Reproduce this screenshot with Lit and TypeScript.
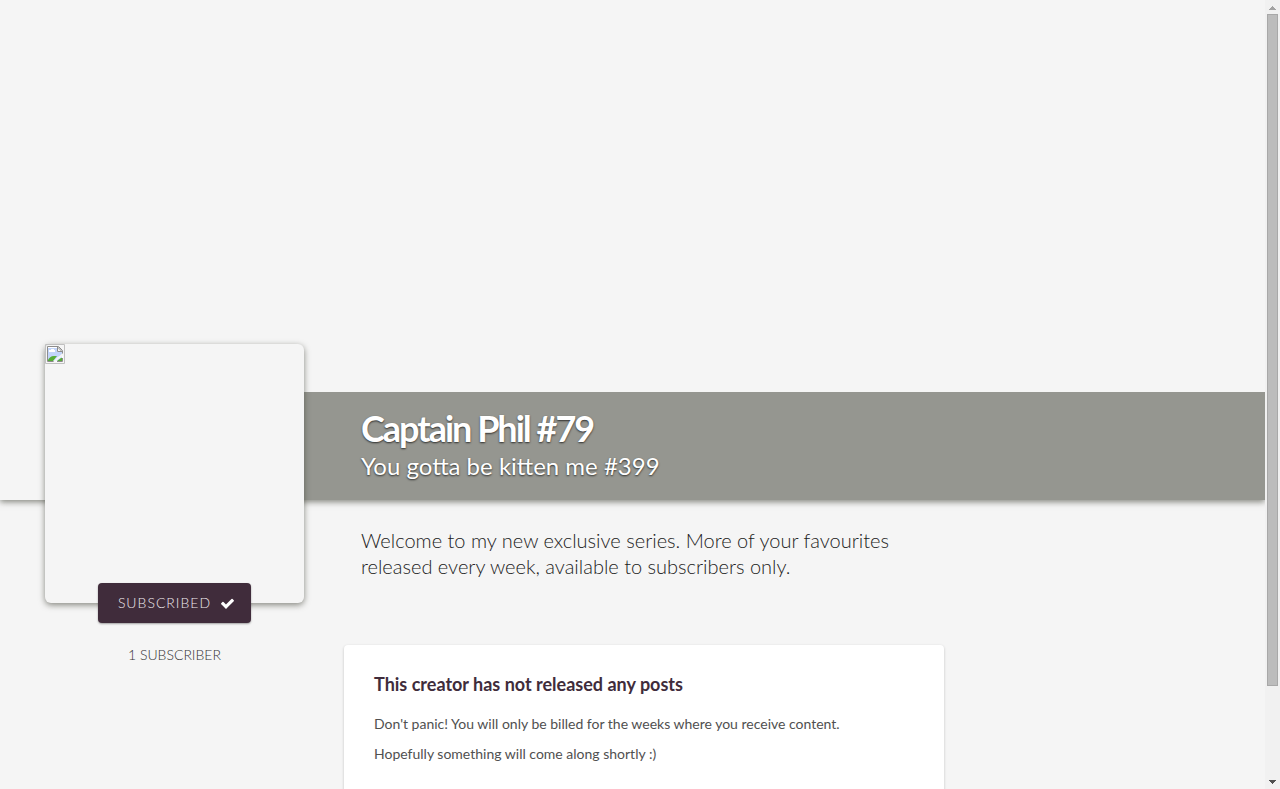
import { LitElement, html, css } from "lit";
import { customElement, property } from "lit/decorators.js";

@customElement("scroll-rail")
class ScrollRail extends LitElement {
  static styles = css`
    :host {
      display: flex;
      flex-direction: column;
      flex: 0 0 15px;
      box-sizing: border-box;
      padding: 0 2px;
      background: #f1f1f1;
    }
    .arrow {
      display: block;
      flex: 0 0 14px;
      width: 11px;
      height: 14px;
    }
    .track {
      flex: 1;
      display: grid;
      grid-template-rows: 672fr 89fr;
    }
    .thumb {
      box-sizing: border-box;
      background: #bcbcbc;
      border: 1px solid #a8a8a8;
    }
  `;

  render() {
    return html`
      <svg class="arrow" viewBox="0 0 11 14" shape-rendering="crispEdges" aria-hidden="true">
        <path fill="#a3a3a3" d="M5 6h1v1h1v1h1v1h1v1H2V9h1V8h1V7h1z" />
      </svg>
      <div class="track"><div class="thumb"></div></div>
      <svg class="arrow" viewBox="0 0 11 14" shape-rendering="crispEdges" aria-hidden="true">
        <path fill="#505050" d="M2 5h7v1H8v1H7v1H6v1H5V8H4V7H3V6H2z" />
      </svg>
    `;
  }
}

@customElement("creator-avatar")
class CreatorAvatar extends LitElement {
  static styles = css`
    :host {
      display: block;
      box-sizing: border-box;
      width: 259px;
      height: 259px;
      border-radius: 6px;
      background: #f5f5f5;
      box-shadow: 0 2px 6px rgba(60, 62, 50, 0.6);
    }
    .missing {
      display: block;
      width: 20px;
      height: 20px;
    }
  `;

  render() {
    return html`
      <svg class="missing" viewBox="0 0 20 20" role="img" aria-label="Creator picture">
        <path fill="none" stroke="#c0c0c0" d="M.5.5h19v19H.5z" />
        <path fill="#fff" d="M2 2h11l5 5v11H2z" />
        <path fill="#c3d5fa" d="M3 4h9v4h5v9H3z" />
        <path fill="#fff" d="M4 8V6h2V5h3v1h1v2z" />
        <path fill="#57ad36" d="M3 16c1-2 3-4 6-4h3l-4 5H3zM12 17l4-3h1v3z" />
        <path fill="none" stroke="#8c8c8c" d="M17.500 10V6.500L13.500 2.500H2.500v15H9M12 17.500h5.500V14" />
        <path fill="#f5f5f5" stroke="#8c8c8c" d="M12.500 3v4.500H17z" />
        <path fill="none" stroke="#f5f5f5" stroke-width="2" d="M9 18l4-4 2-1 3-3" />
      </svg>
    `;
  }
}

@customElement("app-root")
class AppRoot extends LitElement {
  @property() name = "Captain Phil #79";
  @property() tagline = "You gotta be kitten me #399";

  static styles = css`
    :host {
      display: flex;
      height: 100vh;
      overflow: hidden;
      background: #f5f5f5;
      color: #505050;
      font-family: Lato, sans-serif;
      font-size: 14px;
      line-height: 20px;
    }
    .page {
      flex: 1;
      min-width: 0;
      overflow: hidden;
      display: grid;
      grid-template-columns: 344px minmax(0, 1fr);
      grid-template-rows: 500px auto;
    }
    .hero {
      grid-area: 1 / 1 / 2 / 3;
      display: flex;
      flex-direction: column;
      justify-content: flex-end;
      box-shadow: 0 2px 6px rgba(60, 62, 50, 0.6);
    }
    .band {
      box-sizing: border-box;
      height: 108px;
      margin-left: 174px;
      padding: 16px 16px 0 187px;
      background: #959690;
      color: #fff;
      text-shadow: 0 1px 2px rgba(0, 0, 0, 0.7);
    }
    .name {
      margin: 0;
      font-size: 36px;
      line-height: 40px;
      font-weight: 700;
      letter-spacing: -2px;
    }
    .tagline {
      margin: 0;
      font-size: 24px;
      line-height: 36px;
      font-weight: 400;
    }
    .side {
      grid-area: 1 / 1 / 3 / 2;
      display: flex;
      flex-direction: column;
      align-items: center;
      align-self: start;
      padding: 344px 40px 0 45px;
    }
    .subscribed {
      display: flex;
      align-items: center;
      gap: 9px;
      height: 40px;
      margin: -20px 0 22px;
      padding: 0 16px 0 20px;
      border: 0;
      border-radius: 4px;
      background: #402c3b;
      color: #efe9ed;
      box-shadow: 0 1px 2px rgba(0, 0, 0, 0.35);
      font: 300 14px/20px Lato, sans-serif;
      letter-spacing: 1px;
      cursor: pointer;
    }
    .tick {
      width: 15px;
      height: 15px;
      fill: #fff;
    }
    .count {
      margin: 0;
      color: #333;
      font-weight: 300;
    }
    .main {
      grid-area: 2 / 2 / 3 / 3;
      padding-top: 27px;
    }
    .intro {
      max-width: 540px;
      margin: 0 0 66px 17px;
      color: #222;
      font-size: 20px;
      line-height: 26px;
      font-weight: 300;
    }
    .card {
      box-sizing: border-box;
      max-width: 600px;
      padding: 29px 30px;
      border-radius: 4px;
      background: #fff;
      box-shadow: 0 1px 3px rgba(0, 0, 0, 0.2);
    }
    .card-title {
      margin: 0 0 20px;
      color: #402c3b;
      font-size: 18px;
      line-height: 20px;
      font-weight: 700;
    }
    .card-text {
      margin: 0 0 10px;
    }
  `;

  render() {
    return html`
      <div class="page">
        <header class="hero">
          <div class="band">
            <h1 class="name">${this.name}</h1>
            <h2 class="tagline">${this.tagline}</h2>
          </div>
        </header>
        <aside class="side">
          <creator-avatar></creator-avatar>
          <button class="subscribed" type="button">
            SUBSCRIBED
            <svg class="tick" viewBox="0 0 1792 1792" aria-hidden="true">
              <path
                d="M1671 566q0 40-28 68l-724 724-136 136q-28 28-68 28t-68-28l-136-136-362-362q-28-28-28-68t28-68l136-136q28-28 68-28t68 28l294 295 656-657q28-28 68-28t68 28l136 136q28 28 28 68z"
              />
            </svg>
          </button>
          <p class="count">1 SUBSCRIBER</p>
        </aside>
        <main class="main">
          <p class="intro">
            Welcome to my new exclusive series. More of your favourites released every week,
            available to subscribers only.
          </p>
          <section class="card">
            <h3 class="card-title">This creator has not released any posts</h3>
            <p class="card-text">
              Don't panic! You will only be billed for the weeks where you receive content.
            </p>
            <p class="card-text">Hopefully something will come along shortly :)</p>
          </section>
        </main>
      </div>
      <scroll-rail></scroll-rail>
    `;
  }
}
